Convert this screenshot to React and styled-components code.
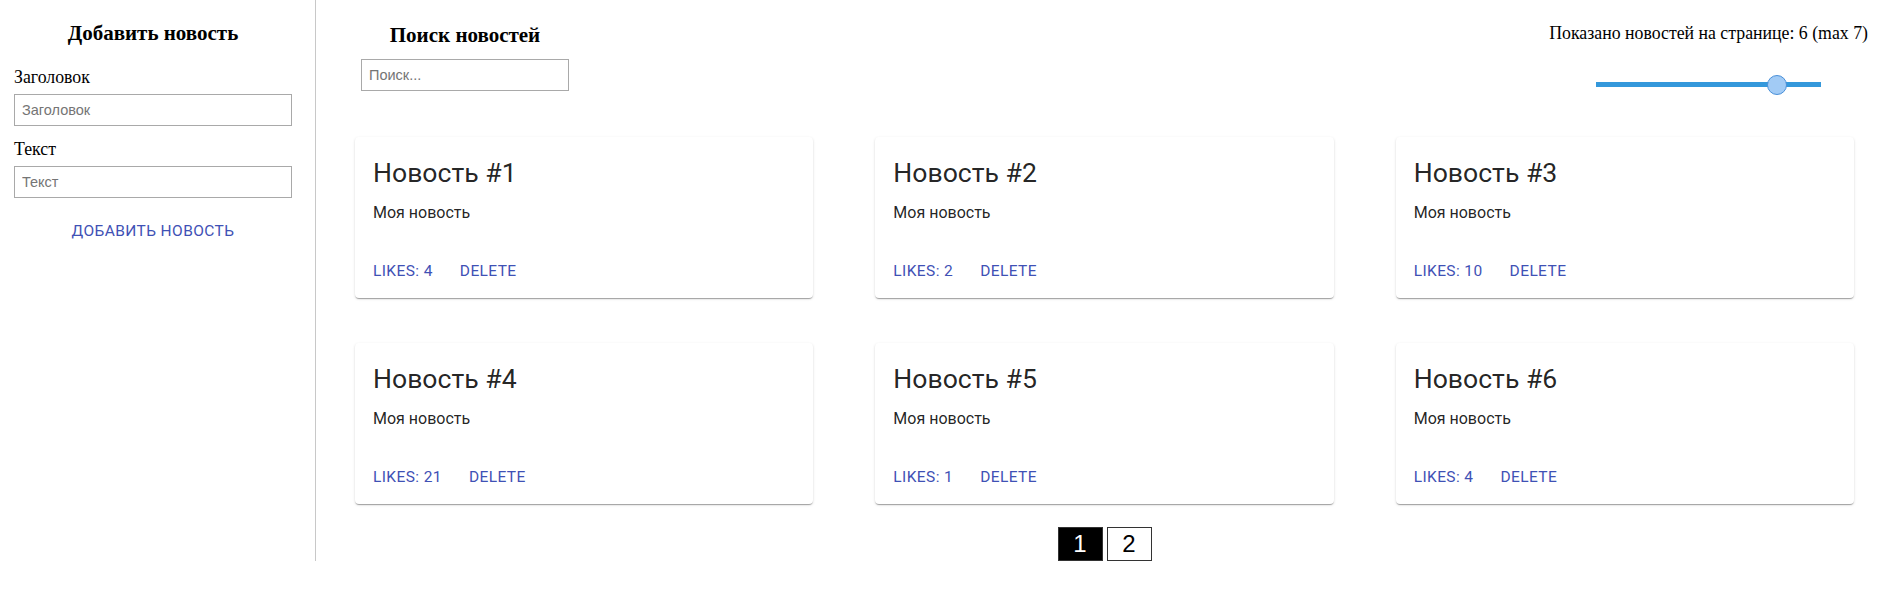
import React, { useState } from "react";
import styled, { createGlobalStyle } from "styled-components";

const GlobalStyle = createGlobalStyle`
  body {
    margin: 0;
    background: #ffffff;
    font-family: "Liberation Serif", "Times New Roman", serif;
    color: #000;
  }
`;

const Page = styled.div`
  display: flex;
  align-items: stretch;
`;

const Sidebar = styled.aside`
  width: 316px;
  flex-shrink: 0;
  box-sizing: border-box;
  padding: 0 23px 0 14px;
  border-right: 1px solid #c8c8c8;
  display: flex;
  flex-direction: column;
`;

const Heading = styled.h3`
  font-size: 21px;
  font-weight: bold;
  text-align: center;
  line-height: 24px;
  margin: ${(props) => props.$top || 21}px 0 ${(props) => props.$bottom || 12}px;
`;

const Label = styled.label`
  display: block;
  font-size: 17.8px;
  line-height: 20px;
  margin: 13px 0 7px;
`;

const TextInput = styled.input`
  box-sizing: border-box;
  width: ${(props) => props.$width || "100%"};
  height: 32px;
  border: 1px solid #a9a9a9;
  padding: 0 7px;
  font-family: "Liberation Sans", Arial, sans-serif;
  font-size: 14.5px;
  outline: none;
  &::placeholder {
    color: #757575;
  }
`;

const TextButton = styled.button`
  font-family: Roboto, "Liberation Sans", sans-serif;
  font-size: 15.5px;
  font-weight: 400;
  line-height: 27px;
  letter-spacing: 0.4px;
  text-transform: uppercase;
  color: #3f51b5;
  background: transparent;
  border: 0;
  border-radius: 4px;
  padding: 7px 9px;
  min-width: 71px;
  cursor: pointer;
`;

const AddButton = styled(TextButton)`
  align-self: center;
  margin-top: 13px;
`;

const Main = styled.main`
  flex: 1;
  display: flex;
  flex-direction: column;
`;

const Toolbar = styled.div`
  display: flex;
  justify-content: space-between;
  align-items: flex-start;
  padding: 0 31px 0 45px;
`;

const SearchBlock = styled.div`
  width: 208px;
  display: flex;
  flex-direction: column;
`;

const PerPageBlock = styled.div`
  display: flex;
  flex-direction: column;
  align-items: center;
  padding-top: 23px;
`;

const PerPageText = styled.div`
  font-size: 17.8px;
  line-height: 20px;
`;

const Range = styled.input`
  -webkit-appearance: none;
  appearance: none;
  width: 225px;
  height: 5px;
  margin: 39px 0 0;
  background: #3498db;
  border-radius: 0;
  outline: none;
  &::-webkit-slider-thumb {
    -webkit-appearance: none;
    width: 20px;
    height: 20px;
    border-radius: 50%;
    background: #a2cbf5;
    border: 1px solid #4a90d9;
    box-sizing: border-box;
    cursor: pointer;
  }
`;

const CardGrid = styled.div`
  display: grid;
  grid-template-columns: repeat(3, 1fr);
  column-gap: 62px;
  row-gap: 45px;
  padding: 0 45px 0 39px;
  margin-top: 46px;
`;

const Card = styled.div`
  height: 161px;
  background: #fff;
  border-radius: 4px;
  box-shadow: 0px 2px 1px -1px rgba(0, 0, 0, 0.2),
    0px 1px 1px 0px rgba(0, 0, 0, 0.14), 0px 1px 3px 0px rgba(0, 0, 0, 0.12);
  display: flex;
  flex-direction: column;
  font-family: Roboto, "Liberation Sans", sans-serif;
  color: rgba(0, 0, 0, 0.87);
`;

const CardContent = styled.div`
  padding: 18px 18px 0;
  flex: 1;
`;

const CardTitle = styled.div`
  font-size: 26.6px;
  line-height: 35px;
  margin-bottom: 12px;
`;

const CardText = styled.div`
  font-size: 16px;
  line-height: 22px;
`;

const CardActions = styled.div`
  display: flex;
  align-items: center;
  gap: 9px;
  padding: 9px 9px 6px;
`;

const Pagination = styled.div`
  display: flex;
  justify-content: center;
  gap: 4px;
  margin-top: 23px;
  padding: 0 45px 0 39px;
`;

const PageButton = styled.button`
  width: 45px;
  height: 34px;
  box-sizing: border-box;
  border: 1px solid #333;
  background: ${(props) => (props.$active ? "#000" : "#fff")};
  color: ${(props) => (props.$active ? "#fff" : "#000")};
  font-family: "Liberation Sans", Arial, sans-serif;
  font-size: 24px;
  padding: 0;
  cursor: pointer;
`;

const initialNews = [
  { id: 1, likes: 4 },
  { id: 2, likes: 2 },
  { id: 3, likes: 10 },
  { id: 4, likes: 21 },
  { id: 5, likes: 1 },
  { id: 6, likes: 4 },
];

const App = () => {
  const [perPage, setPerPage] = useState(6);
  const [page, setPage] = useState(1);

  return (
    <>
      <GlobalStyle />
      <Page>
        <Sidebar>
          <Heading $top={21} $bottom={9}>
            Добавить новость
          </Heading>
          <Label>Заголовок</Label>
          <TextInput placeholder="Заголовок" />
          <Label>Текст</Label>
          <TextInput placeholder="Текст" />
          <AddButton>Добавить новость</AddButton>
        </Sidebar>
        <Main>
          <Toolbar>
            <SearchBlock>
              <Heading $top={23} $bottom={12}>
                Поиск новостей
              </Heading>
              <TextInput $width="208px" placeholder="Поиск..." />
            </SearchBlock>
            <PerPageBlock>
              <PerPageText>
                Показано новостей на странице: {perPage} (max 7)
              </PerPageText>
              <Range
                type="range"
                min={1}
                max={7}
                value={perPage}
                onChange={(e) => setPerPage(Number(e.target.value))}
              />
            </PerPageBlock>
          </Toolbar>
          <CardGrid>
            {initialNews.map((item) => (
              <Card key={item.id}>
                <CardContent>
                  <CardTitle>Новость #{item.id}</CardTitle>
                  <CardText>Моя новость</CardText>
                </CardContent>
                <CardActions>
                  <TextButton>Likes: {item.likes}</TextButton>
                  <TextButton>Delete</TextButton>
                </CardActions>
              </Card>
            ))}
          </CardGrid>
          <Pagination>
            {[1, 2].map((n) => (
              <PageButton key={n} $active={n === page} onClick={() => setPage(n)}>
                {n}
              </PageButton>
            ))}
          </Pagination>
        </Main>
      </Page>
    </>
  );
};

export default App;
